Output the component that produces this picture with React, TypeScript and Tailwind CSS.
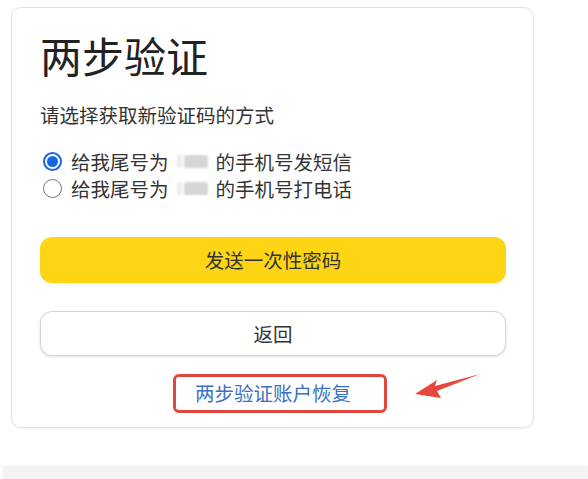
import React from "react";

const font = { fontFamily: '"Microsoft YaHei", "Noto Sans CJK SC", "Noto Sans", sans-serif' };

function Radio({ checked }: { checked?: boolean }) {
  if (checked) {
    return (
      <span className="flex h-[19px] w-[19px] shrink-0 items-center justify-center rounded-full border-[2px] border-[#1466e0] bg-white">
        <span className="h-[11px] w-[11px] rounded-full bg-[#1466e0]" />
      </span>
    );
  }
  return <span className="h-[19px] w-[19px] shrink-0 rounded-full border-[1.5px] border-[#777] bg-white" />;
}

function Masked() {
  return (
    <span className="mx-[8px] inline-flex h-[13px] w-[31px] items-center">
      <span className="h-full w-[5px] bg-[#ececec] blur-[1px]" />
      <span className="ml-[2px] h-full w-[24px] rounded-[2px] bg-[#d6d6d6] blur-[1px]" />
    </span>
  );
}

function Option({ checked, tail }: { checked?: boolean; tail: string }) {
  return (
    <label className="flex h-[27px] items-center pl-[3px] text-[19.5px] text-[#333]">
      <Radio checked={checked} />
      <span className="ml-[9px]">给我尾号为</span>
      <Masked />
      <span>{tail}</span>
    </label>
  );
}

export default function App() {
  return (
    <div className="relative h-[479px] w-[588px] overflow-hidden bg-white" style={font}>
      <div className="ml-[11px] mt-[7px] h-[421px] w-[523px] rounded-[10px] border border-[#e3e3e3] bg-white px-[28px] pt-[22px] shadow-[0_1px_2px_rgba(0,0,0,0.06)]">
        <h1 className="text-[42px] leading-[50px] font-normal text-[#222]">两步验证</h1>
        <p className="mt-[21px] text-[19.5px] leading-[28px] text-[#333]">请选择获取新验证码的方式</p>
        <div className="mt-[19px] flex flex-col">
          <Option checked tail="的手机号发短信" />
          <Option tail="的手机号打电话" />
        </div>
        <button className="mt-[35px] flex h-[46px] w-[466px] items-center justify-center rounded-[12px] bg-[#fdd514] text-[19.5px] text-[#333] shadow-[0_1px_3px_rgba(0,0,0,0.08)]">
          发送一次性密码
        </button>
        <button className="mt-[28px] flex h-[45px] w-[466px] items-center justify-center rounded-[12px] border border-[#d4d4d4] bg-white text-[19.5px] text-[#333] shadow-[0_1px_3px_rgba(0,0,0,0.12)]">
          返回
        </button>
        <div className="mt-[26px] flex w-[466px] justify-center">
          <a className="relative text-[19.5px] leading-[22px] text-[#3a70c2]">
            两步验证账户恢复
            <span className="pointer-events-none absolute -bottom-[9px] -left-[22px] -right-[36px] -top-[8px] rounded-[6px] border-[3px] border-[#e0473c]" />
          </a>
        </div>
      </div>
      <div className="ml-[3px] mt-[39px] h-[12px] bg-[#f3f3f3] shadow-[0_-1px_3px_rgba(0,0,0,0.08)]" />
      <svg className="absolute left-0 top-0" width="588" height="479" viewBox="0 0 588 479">
        <polygon points="415,394 437,380 435,386 480,374 437,391 441,398" fill="#e8473a" />
      </svg>
    </div>
  );
}
